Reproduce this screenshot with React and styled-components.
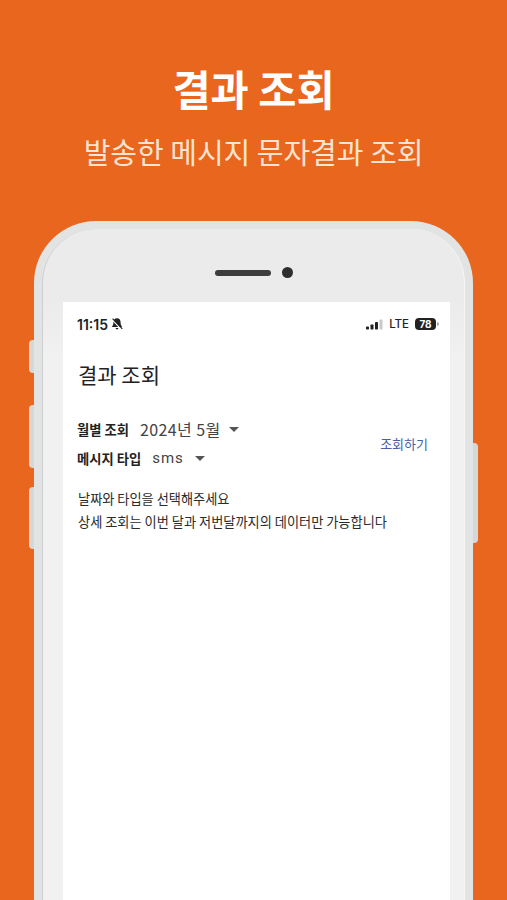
import React from 'react';
import styled, { createGlobalStyle } from 'styled-components';

const Global = createGlobalStyle`
  html, body { margin: 0; padding: 0; background: #e8661d; }
  body { font-family: "Noto Sans CJK KR", "Noto Sans", sans-serif; }
`;

const Page = styled.div`
  width: 507px;
  height: 900px;
  overflow: hidden;
  background: #e8661d;
  display: flex;
  flex-direction: column;
  align-items: center;
`;

const Header = styled.header`
  height: 221px;
  flex: none;
  display: flex;
  flex-direction: column;
  align-items: center;
  color: #fff;
  padding-top: 58px;
  box-sizing: border-box;
`;

const Title = styled.h1`
  margin: 0;
  font-size: 41.5px;
  line-height: 60px;
  font-weight: 700;
`;

const Subtitle = styled.p`
  margin: 12px 0 0;
  font-size: 29px;
  line-height: 42px;
  font-weight: 400;
  color: #fde3d2;
`;

const Phone = styled.div`
  position: relative;
  width: 439px;
  height: 720px;
  flex: none;
  box-sizing: border-box;
  padding: 8px 8px 0;
  background: #e2e3e3;
  border-radius: 62px 62px 0 0;
`;

const Shell = styled.div`
  height: 100%;
  box-sizing: border-box;
  padding: 0 14px 0 20px;
  background: linear-gradient(to bottom, #ebebeb 70px, #f1f1f1 130px);
  border-radius: 54px 54px 0 0;
  border-left: 1px solid #cfcfcf;
  border-right: 1px solid #f6f6f6;
  display: flex;
  flex-direction: column;
`;

const Speaker = styled.div`
  height: 73px;
  flex: none;
  display: flex;
  align-items: center;
  justify-content: center;
  gap: 11px;
  padding: 14px 5px 0 0;
  box-sizing: border-box;
`;

const Grille = styled.span`
  width: 56px;
  height: 6px;
  border-radius: 3px;
  background: #3d3d3d;
`;

const Camera = styled.span`
  width: 11px;
  height: 11px;
  border-radius: 50%;
  background: #2e2e2e;
`;

const SideButton = styled.span`
  position: absolute;
  top: ${p => p.$top}px;
  height: ${p => p.$h}px;
  width: 5px;
  background: #d6d7d8;
  ${p => p.$right
    ? 'right: -5px; border-radius: 0 4px 4px 0;'
    : 'left: -5px; border-radius: 4px 0 0 4px;'}
`;

const Screen = styled.main`
  flex: 1;
  background: #fff;
  color: #222;
  display: flex;
  flex-direction: column;
  padding: 0 14px;
`;

const StatusBar = styled.div`
  height: 44px;
  flex: none;
  display: flex;
  align-items: center;
  justify-content: space-between;
  margin-right: -3px;
`;

const StatusGroup = styled.div`
  display: flex;
  align-items: center;
  gap: ${p => p.$gap}px;
`;

const Time = styled.span`
  font-family: "Inter", "Liberation Sans", sans-serif;
  font-size: 14px;
  font-weight: 600;
  color: #222;
`;

const Lte = styled.span`
  font-family: "Inter", "Liberation Sans", sans-serif;
  font-size: 11.5px;
  font-weight: 500;
  color: #222;
`;

const Battery = styled.span`
  position: relative;
  width: 21px;
  height: 12px;
  border-radius: 4px;
  background: #222;
  color: #fff;
  font-family: "Inter", "Liberation Sans", sans-serif;
  font-size: 10px;
  font-weight: 700;
  line-height: 12px;
  text-align: center;
  margin-right: 3px;
  &::after {
    content: '';
    position: absolute;
    right: -3px;
    top: 4px;
    width: 2px;
    height: 4px;
    border-radius: 0 2px 2px 0;
    background: #aaa;
  }
`;

const PageTitle = styled.h2`
  margin: 13px 0 0 1px;
  font-size: 21px;
  line-height: 30px;
  font-weight: 400;
  color: #222;
`;

const QueryRow = styled.section`
  margin-top: 29px;
  display: flex;
  align-items: center;
  justify-content: space-between;
  padding-right: 8px;
`;

const Fields = styled.div`
  display: flex;
  flex-direction: column;
  gap: 7px;
`;

const Field = styled.div`
  display: flex;
  align-items: center;
  height: 22px;
`;

const Label = styled.span`
  font-size: 13.3px;
  font-weight: 700;
  color: #222;
  margin-right: ${p => p.$gap}px;
`;

const Value = styled.span`
  font-size: ${p => p.$latin ? 15 : 16}px;
  color: #444;
  font-family: ${p => p.$latin ? '"Roboto", sans-serif' : 'inherit'};
  letter-spacing: ${p => p.$latin ? '1px' : '0.4px'};
`;

const Caret = styled.span`
  width: 0;
  height: 0;
  margin-left: ${p => p.$gap}px;
  border-left: 5px solid transparent;
  border-right: 5px solid transparent;
  border-top: 5px solid #555;
`;

const QueryButton = styled.button`
  border: 0;
  background: none;
  padding: 0;
  font: inherit;
  font-size: 13px;
  color: #4a5da5;
`;

const Notes = styled.div`
  margin: 18px 0 0 1px;
  font-size: 13.2px;
  line-height: 23px;
  color: #2b2b2b;
`;

export default function App() {
  return (
    <Page>
      <Global />
      <Header>
        <Title>결과 조회</Title>
        <Subtitle>발송한 메시지 문자결과 조회</Subtitle>
      </Header>
      <Phone>
        <SideButton $top={119} $h={33} />
        <SideButton $top={184} $h={63} />
        <SideButton $top={266} $h={62} />
        <SideButton $right $top={222} $h={100} />
        <Shell>
          <Speaker>
            <Grille />
            <Camera />
          </Speaker>
          <Screen>
            <StatusBar>
              <StatusGroup $gap={2}>
                <Time>11:15</Time>
                <svg width="14" height="14" viewBox="0 0 13 13" aria-hidden="true">
                  <path d="M6.5 1.2c-2 0-3.3 1.5-3.3 3.4 0 2.4-.6 3.6-1.5 4.6h9.6c-.9-1-1.5-2.2-1.5-4.6 0-1.9-1.3-3.4-3.3-3.4z" fill="#222" />
                  <path d="M5.2 10.3h2.6a1.3 1.3 0 0 1-2.6 0z" fill="#222" />
                  <path d="M1.8 2.2l9 9.6" stroke="#fff" strokeWidth="1.2" />
                  <path d="M2.4 1.4l9 9.6" stroke="#222" strokeWidth="1" />
                </svg>
              </StatusGroup>
              <StatusGroup $gap={6}>
                <svg width="17" height="11" viewBox="0 0 17 11" aria-hidden="true">
                  <rect x="0" y="7.5" width="3" height="3" rx=".7" fill="#222" />
                  <rect x="4.5" y="5.5" width="3" height="5" rx=".7" fill="#222" />
                  <rect x="9" y="3" width="3" height="7.5" rx=".7" fill="#222" />
                  <rect x="13.5" y=".5" width="3" height="10" rx=".7" fill="#c9c9c9" />
                </svg>
                <Lte>LTE</Lte>
                <Battery>78</Battery>
              </StatusGroup>
            </StatusBar>
            <PageTitle>결과 조회</PageTitle>
            <QueryRow>
              <Fields>
                <Field>
                  <Label $gap={11}>월별 조회</Label>
                  <Value>2024년 5월</Value>
                  <Caret $gap={8} />
                </Field>
                <Field>
                  <Label $gap={11}>메시지 타입</Label>
                  <Value $latin>sms</Value>
                  <Caret $gap={11} />
                </Field>
              </Fields>
              <QueryButton type="button">조회하기</QueryButton>
            </QueryRow>
            <Notes>
              날짜와 타입을 선택해주세요
              <br />
              상세 조회는 이번 달과 저번달까지의 데이터만 가능합니다
            </Notes>
          </Screen>
        </Shell>
      </Phone>
    </Page>
  );
}
